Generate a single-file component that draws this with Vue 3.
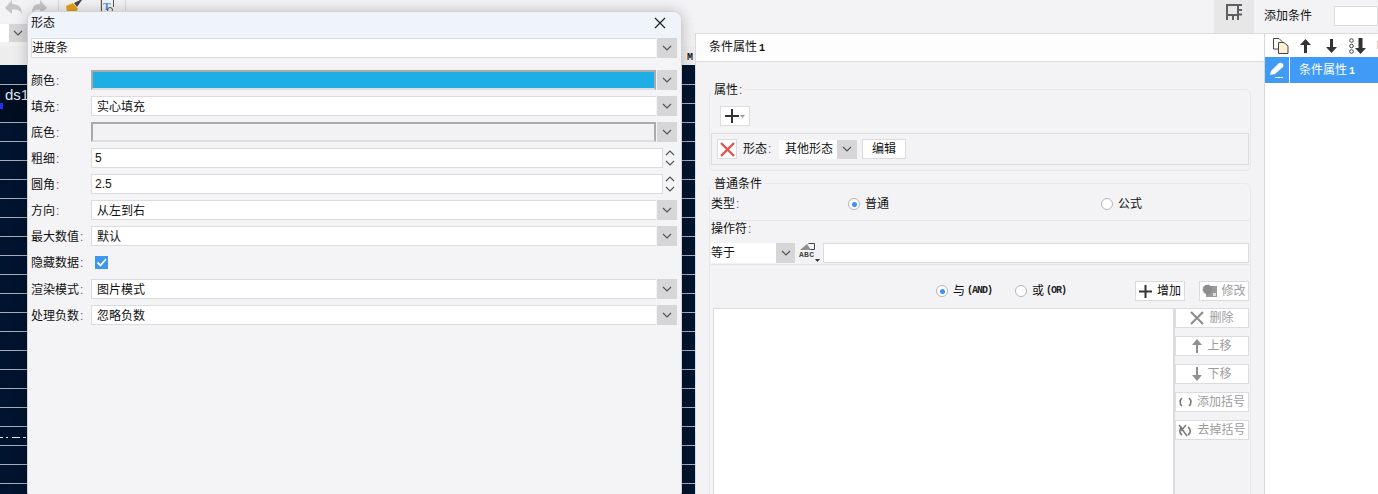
<script setup>
const sideButtons = [
  { label: '删除', icon: 'x' },
  { label: '上移', icon: 'up' },
  { label: '下移', icon: 'down' },
  { label: '添加括号', icon: 'paren' },
  { label: '去掉括号', icon: 'noparen' }
]
</script>

<template>
  <div class="app">
    <section class="work">
      <div class="toolbar">
        <svg class="tool undo" width="48" height="16" viewBox="0 0 48 16">
          <path d="M5 8 L12 0 V4 C18 3.500 22 7 22 14 C20 10 17 9 12 9.500 V14 Z" fill="#c6c6c6" />
          <path d="M47 8 L40 0 V4 C34 3.500 32 7 32 14 C34 10 36 9 40 9.500 V14 Z" fill="#c6c6c6" />
        </svg>
        <span class="tsep first"></span>
        <svg class="tool brush" width="18" height="13" viewBox="0 0 18 13">
          <path d="M1 6 L8 3 L13 9 L11 12 H2 Z" fill="#e6a117" />
          <path d="M9 3 L15 0 H17 L12 7 Z" fill="#4a4a4a" />
        </svg>
        <span class="tsep second"></span>
        <svg class="tool ticon" width="14" height="14" viewBox="0 0 14 14">
          <path d="M0.500 0 V11.500 H6 M12.500 0 V7" fill="none" stroke="#555" />
          <text x="2" y="10" font-size="11" font-weight="700" fill="#3f8fe8" font-family="Liberation Serif, serif">T</text>
          <circle cx="9" cy="10" r="2.500" fill="none" stroke="#555" />
        </svg>
        <span class="tsep third"></span>
      </div>
      <div class="subbar">
        <span class="sub-input"></span>
        <span class="sub-arrow">
          <svg width="10" height="6" viewBox="0 0 10 6"><path d="M1 1 L5 5 L9 1" fill="none" stroke="#555" stroke-width="1.200" /></svg>
        </span>
      </div>
      <div class="ruler"><b class="ruler-m">M</b></div>
      <div class="canvas">
        <div class="cell"><span class="cell-text">ds1</span><i class="cell-mark"></i></div>
        <div class="dash"></div>
      </div>
    </section>

    <header class="topbar">
      <button class="layout-btn" aria-label="布局">
        <svg width="18" height="17" viewBox="0 0 18 17">
          <path d="M1 1 H17 M2 1 V16 M2 11 H13 M8 11 V16 M13 11 V16 M13 6 H17 M13 10.500 H17 M13 1 V11" fill="none" stroke="#5f5f63" stroke-width="2" />
        </svg>
      </button>
      <span class="add-label">添加条件</span>
      <span class="add-input"></span>
    </header>

    <main class="panel">
      <div class="panel-tab">条件属性<span class="mono-one">1</span></div>

      <div class="group attr-group">
        <div class="legend">属性<span class="colon">:</span></div>
        <button class="plus-btn">
          <svg width="14" height="14" viewBox="0 0 14 14"><path d="M0 7 H14 M7 0 V14" stroke="#333" stroke-width="2" /></svg>
          <svg width="5" height="3" viewBox="0 0 5 3"><path d="M0 0 H5 L2.500 3 Z" fill="#999" /></svg>
        </button>
        <div class="attr-row">
          <button class="del-btn">
            <svg width="15" height="15" viewBox="0 0 15 15"><path d="M1 1 L14 14 M14 1 L1 14" stroke="#e8514d" stroke-width="2.400" /></svg>
          </button>
          <span class="attr-name">形态<span class="colon">:</span></span>
          <div class="attr-select">
            <span class="attr-value">其他形态</span>
            <span class="attr-arrow">
              <svg width="10" height="6" viewBox="0 0 10 6"><path d="M1 1 L5 5 L9 1" fill="none" stroke="#555" stroke-width="1.200" /></svg>
            </span>
          </div>
          <button class="plain-btn">编辑</button>
        </div>
      </div>

      <div class="group cond-group">
        <div class="legend">普通条件</div>
        <div class="type-row">
          <span class="type-label">类型<span class="colon">:</span></span>
          <label class="radio r-normal"><i class="dot on"></i>普通</label>
          <label class="radio r-formula"><i class="dot"></i>公式</label>
        </div>
        <div class="op-label">操作符<span class="colon">:</span></div>
        <div class="op-row">
          <div class="op-select">
            <span class="op-value">等于</span>
            <span class="op-arrow">
              <svg width="10" height="6" viewBox="0 0 10 6"><path d="M1 1 L5 5 L9 1" fill="none" stroke="#555" stroke-width="1.200" /></svg>
            </span>
          </div>
          <span class="abc">
            <svg width="16" height="8" viewBox="0 0 16 8">
              <path d="M9.500 0.500 H15.500 V6.500 H10" fill="none" stroke="#444" />
              <path d="M1 7 L8 1 L12 7 Z" fill="#8f8f8f" />
            </svg>
            <span class="abc-text">ABC</span>
            <svg class="abc-caret" width="5" height="3" viewBox="0 0 5 3"><path d="M0 0 H5 L2.500 3 Z" fill="#333" /></svg>
          </span>
          <span class="op-input"></span>
        </div>
        <div class="logic-row">
          <label class="radio r-and"><i class="dot on"></i>与<span class="mono-logic">(AND)</span></label>
          <label class="radio r-or"><i class="dot"></i>或<span class="mono-logic">(OR)</span></label>
          <button class="plain-btn add-btn">
            <svg width="13" height="13" viewBox="0 0 13 13"><path d="M0 6.500 H13 M6.500 0 V13" stroke="#333" stroke-width="2" /></svg>
            增加
          </button>
          <button class="plain-btn off-btn edit-btn">
            <svg width="15" height="14" viewBox="0 0 15 14">
              <rect x="4" y="2" width="11" height="11" fill="#9a9a9a" />
              <circle cx="5.500" cy="5.500" r="4.500" fill="#8c8c8c" stroke="#8c8c8c" stroke-dasharray="2 1" />
              <rect x="11" y="9" width="3" height="3" fill="#ddd" />
            </svg>
            修改
          </button>
        </div>
        <div class="list-row">
          <div class="list-box"></div>
          <div class="side">
            <button v-for="b in sideButtons" :key="b.label" class="plain-btn off-btn side-btn">
              <svg v-if="b.icon === 'x'" class="si" width="14" height="14" viewBox="0 0 14 14"><path d="M1 1 L13 13 M13 1 L1 13" stroke="#8f8f8f" stroke-width="2.200" /></svg>
              <svg v-else-if="b.icon === 'up'" class="si" width="10" height="14" viewBox="0 0 10 14"><path d="M5 0 L10 6 H6 V14 H4 V6 H0 Z" fill="#8f8f8f" /></svg>
              <svg v-else-if="b.icon === 'down'" class="si" width="10" height="14" viewBox="0 0 10 14"><path d="M5 14 L10 8 H6 V0 H4 V8 H0 Z" fill="#8f8f8f" /></svg>
              <svg v-else-if="b.icon === 'paren'" class="si" width="13" height="10" viewBox="0 0 13 10"><path d="M3 1 C0.500 3 0.500 7 3 9 M10 1 C12.500 3 12.500 7 10 9" fill="none" stroke="#777" stroke-width="1.600" /></svg>
              <svg v-else class="si" width="14" height="13" viewBox="0 0 14 13"><path d="M4 3 C1 5 1 9 4 11 M10 3 C13 5 13 9 10 11" fill="none" stroke="#777" stroke-width="1.600" /><path d="M1 1 L9 12 M8 1 L3 7" fill="none" stroke="#777" stroke-width="1.400" /></svg>
              <span>{{ b.label }}</span>
            </button>
          </div>
        </div>
      </div>
    </main>

    <aside class="list-panel">
      <div class="list-tools">
        <svg class="lt copy" width="17" height="17" viewBox="0 0 17 17">
          <path d="M1.500 1.500 H7 L10 4.500 V12 H1.500 Z" fill="#fff" stroke="#444" />
          <path d="M6.500 5.500 H12 L16 9 V16.500 H6.500 Z" fill="#fdf1d0" stroke="#444" />
        </svg>
        <svg class="lt up" width="11" height="14" viewBox="0 0 11 14"><path d="M5.500 0 L11 6 H7 V14 H4 V6 H0 Z" fill="#333" /></svg>
        <svg class="lt down" width="11" height="14" viewBox="0 0 11 14"><path d="M5.500 14 L11 8 H7 V0 H4 V8 H0 Z" fill="#333" /></svg>
        <svg class="lt sort" width="17" height="16" viewBox="0 0 17 16">
          <circle cx="2.500" cy="2.500" r="1.800" fill="none" stroke="#444" />
          <circle cx="2.500" cy="8" r="1.800" fill="none" stroke="#444" />
          <circle cx="2.500" cy="13.500" r="1.800" fill="none" stroke="#444" />
          <path d="M11.500 16 L17 10 H13.500 V0 H9.500 V10 H6 Z" fill="#333" />
        </svg>
        <span class="cut-mark"></span>
      </div>
      <div class="list-item">
        <span class="pencil-cell">
          <svg width="16" height="17" viewBox="0 0 16 17">
            <path d="M1 13 L2 9 L10 1 Q12 0 14 2 Q15 4 14 5 L6 12 Z" fill="#fff" />
            <path d="M6 15.500 H14" stroke="#fff" stroke-width="1" />
          </svg>
        </span>
        <span class="item-text">条件属性<span class="mono-one">1</span></span>
      </div>
    </aside>

    <div class="dialog">
      <div class="dialog-title">
        <span>形态</span>
        <svg class="close" width="12" height="12" viewBox="0 0 12 12"><path d="M1 1 L11 11 M11 1 L1 11" stroke="#222" stroke-width="1.200" /></svg>
      </div>
      <div class="field-select kind">
        <span class="fs-value flush">进度条</span>
        <span class="fs-arrow"><svg width="10" height="6" viewBox="0 0 10 6"><path d="M1 1 L5 5 L9 1" fill="none" stroke="#555" stroke-width="1.200" /></svg></span>
      </div>

      <div class="form">
        <label class="flabel">颜色<span class="colon">:</span></label>
        <div class="field-select">
          <span class="swatch blue"></span>
          <span class="fs-arrow"><svg width="10" height="6" viewBox="0 0 10 6"><path d="M1 1 L5 5 L9 1" fill="none" stroke="#555" stroke-width="1.200" /></svg></span>
        </div>

        <label class="flabel">填充<span class="colon">:</span></label>
        <div class="field-select">
          <span class="fs-value">实心填充</span>
          <span class="fs-arrow"><svg width="10" height="6" viewBox="0 0 10 6"><path d="M1 1 L5 5 L9 1" fill="none" stroke="#555" stroke-width="1.200" /></svg></span>
        </div>

        <label class="flabel">底色<span class="colon">:</span></label>
        <div class="field-select">
          <span class="swatch grey"></span>
          <span class="fs-arrow"><svg width="10" height="6" viewBox="0 0 10 6"><path d="M1 1 L5 5 L9 1" fill="none" stroke="#555" stroke-width="1.200" /></svg></span>
        </div>

        <label class="flabel">粗细<span class="colon">:</span></label>
        <div class="field-spin">
          <span class="spin-value">5</span>
          <span class="spin">
            <svg width="10" height="6" viewBox="0 0 10 6"><path d="M1 5 L5 1 L9 5" fill="none" stroke="#555" stroke-width="1.200" /></svg>
            <svg width="10" height="6" viewBox="0 0 10 6"><path d="M1 1 L5 5 L9 1" fill="none" stroke="#555" stroke-width="1.200" /></svg>
          </span>
        </div>

        <label class="flabel">圆角<span class="colon">:</span></label>
        <div class="field-spin">
          <span class="spin-value">2.5</span>
          <span class="spin">
            <svg width="10" height="6" viewBox="0 0 10 6"><path d="M1 5 L5 1 L9 5" fill="none" stroke="#555" stroke-width="1.200" /></svg>
            <svg width="10" height="6" viewBox="0 0 10 6"><path d="M1 1 L5 5 L9 1" fill="none" stroke="#555" stroke-width="1.200" /></svg>
          </span>
        </div>

        <label class="flabel">方向<span class="colon">:</span></label>
        <div class="field-select">
          <span class="fs-value">从左到右</span>
          <span class="fs-arrow"><svg width="10" height="6" viewBox="0 0 10 6"><path d="M1 1 L5 5 L9 1" fill="none" stroke="#555" stroke-width="1.200" /></svg></span>
        </div>

        <label class="flabel">最大数值<span class="colon">:</span></label>
        <div class="field-select">
          <span class="fs-value">默认</span>
          <span class="fs-arrow"><svg width="10" height="6" viewBox="0 0 10 6"><path d="M1 1 L5 5 L9 1" fill="none" stroke="#555" stroke-width="1.200" /></svg></span>
        </div>

        <label class="flabel">隐藏数据<span class="colon">:</span></label>
        <div class="check-wrap">
          <span class="check">
            <svg width="13" height="13" viewBox="0 0 13 13"><path d="M2.500 6.500 L5.500 9.500 L11 3" fill="none" stroke="#fff" stroke-width="1.800" /></svg>
          </span>
        </div>

        <label class="flabel lowered">渲染模式<span class="colon">:</span></label>
        <div class="field-select lowered">
          <span class="fs-value">图片模式</span>
          <span class="fs-arrow"><svg width="10" height="6" viewBox="0 0 10 6"><path d="M1 1 L5 5 L9 1" fill="none" stroke="#555" stroke-width="1.200" /></svg></span>
        </div>

        <label class="flabel lowered">处理负数<span class="colon">:</span></label>
        <div class="field-select lowered">
          <span class="fs-value">忽略负数</span>
          <span class="fs-arrow"><svg width="10" height="6" viewBox="0 0 10 6"><path d="M1 1 L5 5 L9 1" fill="none" stroke="#555" stroke-width="1.200" /></svg></span>
        </div>
      </div>
    </div>
  </div>
</template>

<style>
html, body { margin: 0; overflow: hidden; }
</style>

<style scoped>
.app {
  position: relative;
  width: 1378px;
  height: 494px;
  overflow: hidden;
  display: grid;
  grid-template-columns: 695px 569px 114px;
  grid-template-rows: 33px 461px;
  background: #f3f3f5;
  color: #111;
  font: 12px/20px "Liberation Sans", "Noto Sans CJK SC", sans-serif;
}
button {
  font: inherit;
  color: inherit;
  padding: 0;
  margin: 0;
  box-sizing: border-box;
  background: #fff;
  border: 1px solid #dcdcde;
  display: flex;
  align-items: center;
  justify-content: center;
}
.colon { color: #7a4a8c; margin-left: 1px; }
.mono-one { font: 700 10px/12px "Liberation Mono", monospace; margin-left: 2px; }

/* left */
.work { grid-column: 1; grid-row: 1 / 3; display: flex; flex-direction: column; min-height: 0; }
.toolbar { height: 23px; flex: none; display: flex; align-items: flex-start; background: #f3f3f5; }
.tool { display: block; flex: none; }
.tsep { width: 1px; height: 11px; background: #d8d8d8; flex: none; }
.tsep.first { margin-left: 10px; }
.brush { margin-left: 6px; }
.tsep.second { margin-left: 17px; }
.tsep.third { margin-left: 10px; }
.subbar { height: 23px; flex: none; display: flex; align-items: flex-start; background: #f1f1f2; }
.sub-input { width: 9px; height: 18px; margin-top: 1px; background: #fff; }
.sub-arrow { width: 18px; height: 18px; margin-top: 1px; background: #d6d6d9; display: flex; align-items: center; justify-content: center; }
.ruler { height: 19px; flex: none; box-sizing: border-box; padding-top: 4px; background: #ededee; display: flex; justify-content: flex-end; align-items: center; }
.ruler-m { font: 700 10px/12px "Liberation Mono", monospace; margin-right: 2px; color: #222; }
.canvas {
  flex: 1;
  min-height: 0;
  position: relative;
  background-color: #01142f;
  background-image: repeating-linear-gradient(to bottom, transparent 0, transparent 18px, #a9aeb6 18px, #a9aeb6 19px);
  background-position: 0 1px;
}
.cell {
  position: absolute;
  left: 0;
  top: 20px;
  width: 28px;
  height: 37px;
  background: #010e22;
  box-sizing: border-box;
}
.cell-text { position: absolute; left: 5px; top: 0; color: #dfe9f5; font: 15px/20px "Liberation Sans", sans-serif; }
.cell-mark { position: absolute; left: 0; top: 18px; width: 3px; height: 6px; background: #1b33f0; }
.dash {
  position: absolute;
  left: 0;
  width: 27px;
  top: 372px;
  height: 1px;
  background-image: repeating-linear-gradient(to right, #e8edf3 0, #e8edf3 3px, transparent 3px, transparent 6px, #e8edf3 6px, #e8edf3 8px, transparent 8px, transparent 12px, #e8edf3 12px, #e8edf3 20px, transparent 20px, transparent 23px, #e8edf3 23px, #e8edf3 26px, transparent 26px, transparent 27px);
}

/* top */
.topbar { grid-column: 2 / 4; grid-row: 1; display: flex; justify-content: flex-end; align-items: flex-start; }
.layout-btn { width: 40px; height: 33px; border: 0; background: #e7e7e8; padding-bottom: 9px; }
.add-label { width: 70px; margin-left: 10px; line-height: 33px; }
.add-input { width: 44px; height: 20px; margin-top: 6px; box-sizing: border-box; background: #fff; border: 1px solid #dcdcde; }

/* panel */
.panel {
  grid-column: 2;
  grid-row: 2;
  min-height: 0;
  overflow: hidden;
  box-sizing: border-box;
  border-left: 1px solid #dcdcde;
  border-top: 1px solid #dcdcde;
}
.panel-tab {
  height: 27px;
  line-height: 26px;
  padding-left: 13px;
  background: #fdfdfd;
  border-bottom: 1px solid #dcdcde;
}
.group {
  box-sizing: border-box;
  width: 542px;
  margin-left: 13px;
  border: 1px solid #e8e8ea;
  border-radius: 6px;
}
.legend {
  display: table;
  height: 14px;
  line-height: 14px;
  margin: -7px 0 0 1px;
  padding: 0 3px;
  background: #f3f3f5;
}
.attr-group { margin-top: 27px; height: 82px; }
.plus-btn { width: 30px; height: 20px; margin: 9px 0 0 10px; gap: 1px; }
.attr-row {
  box-sizing: border-box;
  width: 538px;
  height: 32px;
  margin: 7px 0 0 1px;
  border: 1px solid #dcdcde;
  display: flex;
  align-items: center;
  padding-left: 5px;
}
.del-btn { width: 20px; height: 20px; }
.attr-name { margin-left: 6px; width: 36px; }
.attr-select { width: 78px; height: 19px; display: flex; background: #fff; line-height: 19px; }
.attr-value { flex: 1; padding-left: 6px; }
.attr-arrow { width: 20px; background: #d6d6d9; display: flex; align-items: center; justify-content: center; }
.plain-btn { height: 20px; }
.attr-row .plain-btn { width: 44px; margin-left: 5px; }
.cond-group { margin-top: 12px; height: 340px; }
.type-row { height: 30px; display: flex; align-items: center; margin: 0 1px; border-bottom: 1px solid #e4e4e6; box-sizing: border-box; padding-bottom: 3px; }
.type-label { width: 137px; }
.radio { display: flex; align-items: center; }
.r-normal { width: 253px; }
.dot {
  box-sizing: border-box;
  width: 12px;
  height: 12px;
  margin-right: 5px;
  border: 1px solid #b5b5b8;
  border-radius: 50%;
  background: #fff;
  flex: none;
  position: relative;
}
.dot.on::after {
  content: "";
  position: absolute;
  left: 2.500px;
  top: 2.500px;
  width: 5px;
  height: 5px;
  border-radius: 50%;
  background: #3c8ff0;
}
.op-label { height: 22px; line-height: 16px; margin-left: 1px; }
.op-row {
  display: flex;
  align-items: flex-start;
  margin: 0 1px;
  height: 22px;
  border-bottom: 1px solid #e4e4e6;
  box-sizing: border-box;
}
.op-select { width: 84px; height: 20px; display: flex; background: #fff; line-height: 20px; }
.op-value { flex: 1; }
.op-arrow { width: 19px; background: #d6d6d9; display: flex; align-items: center; justify-content: center; }
.abc { width: 24px; margin-left: 4px; height: 20px; position: relative; display: flex; flex-direction: column; }
.abc svg { display: block; }
.abc-text { font: 700 8px/8px "Liberation Mono", monospace; letter-spacing: .3px; color: #444; }
.abc-caret { position: absolute; left: 16px; top: 16px; }
.op-input { width: 426px; height: 20px; box-sizing: border-box; background: #fff; border: 1px solid #dcdcde; }
.logic-row { display: flex; align-items: center; height: 20px; margin-top: 16px; margin-left: 226px; }
.r-and { width: 79px; }
.r-or { width: 120px; }
.mono-logic { font: 700 10px/12px "Liberation Mono", monospace; letter-spacing: -1px; margin-left: 2px; color: #222; }
.add-btn { width: 50px; gap: 5px; }
.off-btn { color: #9c9c9c; }
.edit-btn { width: 50px; margin-left: 14px; gap: 4px; }
.list-row { display: flex; margin: 7px 0 0 3px; }
.list-box { width: 462px; height: 200px; box-sizing: border-box; background: #fff; border: 1px solid #dcdcde; border-right-width: 2px; }
.side { display: flex; flex-direction: column; gap: 8px; }
.side-btn { width: 74px; gap: 5px; }
.si { flex: none; }

/* list */
.list-panel {
  grid-column: 3;
  grid-row: 2;
  min-height: 0;
  overflow: hidden;
  background: #fff;
  border-left: 1px solid #d8d8da;
  border-top: 1px solid #dcdcde;
  box-sizing: border-box;
}
.list-tools { height: 23px; display: flex; align-items: center; position: relative; padding-left: 7px; }
.lt { flex: none; }
.up { margin-left: 11px; }
.down { margin-left: 15px; }
.sort { margin-left: 12px; }
.cut-mark { position: absolute; right: 0; top: 7px; width: 1px; height: 8px; background: #f6c9c9; }
.list-item { height: 26px; display: flex; background: #409bf7; color: #fff; }
.pencil-cell { width: 24px; border-right: 1px solid #fff; display: flex; align-items: center; justify-content: center; }
.item-text { margin-left: 9px; line-height: 26px; }

/* dialog */
.dialog {
  position: absolute;
  left: 27px;
  top: 11px;
  width: 655px;
  height: 490px;
  box-sizing: border-box;
  background: #f4f4f6;
  border: 1px solid #d2d2d6;
  border-radius: 9px;
  box-shadow: 0 0 14px rgba(0, 0, 0, .22);
  padding: 0 4px 0 3px;
}
.dialog-title {
  box-sizing: border-box;
  height: 26px;
  margin: 0 -4px 0 -3px;
  padding: 0 15px 4px 3px;
  display: flex;
  align-items: center;
  justify-content: space-between;
  background: #eff3fa;
  border-radius: 8px 8px 0 0;
}
.field-select {
  display: flex;
  height: 20px;
  min-width: 0;
}
.kind { width: 646px; }
.fs-value {
  flex: 1;
  box-sizing: border-box;
  height: 20px;
  padding-left: 5px;
  background: #fff;
  border: 1px solid #dcdcde;
  border-right: 0;
  line-height: 20px;
}
.fs-value.flush { padding-left: 0; line-height: 18px; }
.fs-arrow {
  flex: none;
  width: 20px;
  margin-left: 1px;
  background: #d6d6d9;
  display: flex;
  align-items: center;
  justify-content: center;
}
.swatch {
  flex: 1;
  box-sizing: border-box;
  height: 20px;
  border: 2px solid #aaa;
  border-bottom-color: #ddd;
}
.swatch.blue { background: #1eaee6; }
.swatch.grey { background: #f2f2f4; }
.form {
  display: grid;
  grid-template-columns: 60px 586px;
  grid-auto-rows: 20px;
  row-gap: 6px;
  margin-top: 12px;
}
.flabel { line-height: 22px; }
.lowered { margin-top: 1px; }
.field-spin { display: flex; }
.spin-value {
  flex: 1;
  box-sizing: border-box;
  padding-left: 3px;
  background: #fff;
  border: 1px solid #dcdcde;
  line-height: 18px;
}
.spin { width: 14px; display: flex; flex-direction: column; align-items: center; justify-content: space-around; }
.check-wrap { display: flex; align-items: center; padding-left: 4px; }
.check { width: 13px; height: 13px; background: #3d97f0; display: flex; }
</style>
